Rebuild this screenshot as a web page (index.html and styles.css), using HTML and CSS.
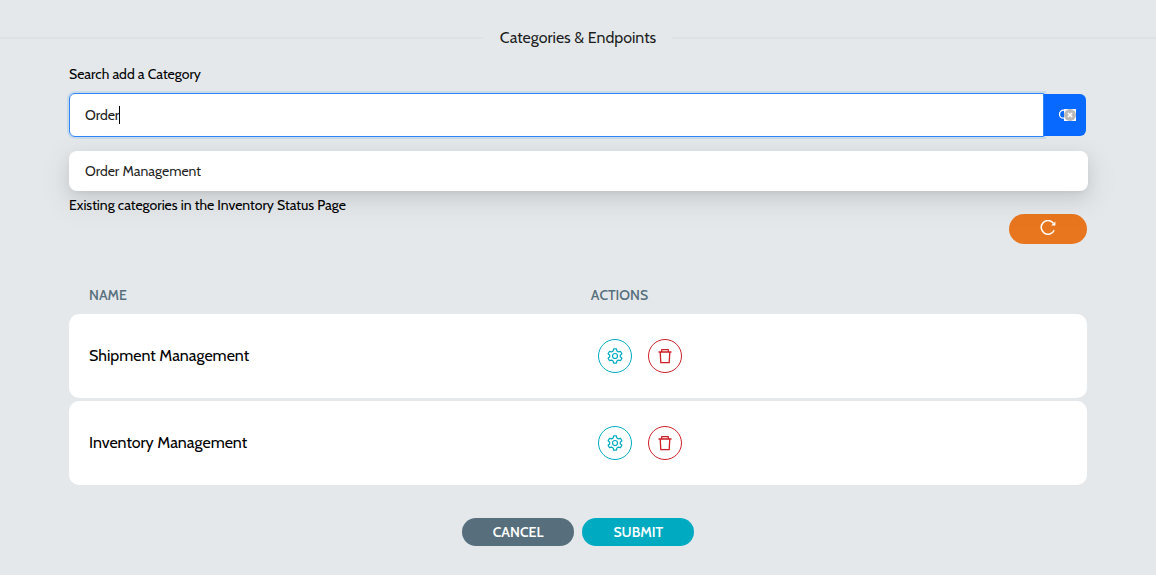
FILE: index.html
```
<!DOCTYPE html>
<html lang="en">
<head>
    <meta charset="UTF-8">
    <meta name="viewport" content="width=device-width, initial-scale=1.0">
    <title>Categories &amp; Endpoints</title>
    <link rel="stylesheet" href="styles.css">
</head>
<body>
    <h1 class="divider">Categories &amp; Endpoints</h1>

    <main class="container">
        <form class="search">
            <label class="label" for="category">Search add a Category</label>
            <div class="search-bar">
                <div class="search-field">
                    <input type="text" id="category" class="search-input" value="Order" autocomplete="off">
                    <span class="caret"></span>
                </div>
                <button type="submit" class="search-btn" aria-label="Search">
                    <svg width="20" height="16" viewBox="0 0 20 16">
                        <path d="M8 3.2H6.5a4 4 0 0 0 0 8H8" fill="none" stroke="#fff" stroke-width="1.3"/>
                        <rect x="7" y="2" width="12" height="12" fill="#fff"/>
                        <circle cx="13" cy="8" r="6" fill="#b9b9b9"/>
                        <path d="M11 6l4 4M15 6l-4 4" stroke="#fff" stroke-width="1.5"/>
                    </svg>
                </button>
            </div>
            <ul class="suggestions">
                <li class="suggestion">Order Management</li>
            </ul>
        </form>

        <p class="label existing">Existing categories in the Inventory Status Page</p>
        <div class="toolbar">
            <button type="button" class="refresh-btn" aria-label="Refresh">
                <svg width="16" height="16" viewBox="0 0 16 16" fill="none" stroke="#fff" stroke-width="1.5">
                    <path d="M14.2 10.2A6.8 6.8 0 1 1 13.4 3.2"/>
                    <path d="M15.4 1.4v4.2h-4.2z" fill="#fff" stroke="none"/>
                </svg>
            </button>
        </div>

        <table class="categories">
            <thead>
                <tr>
                    <th class="col-name">Name</th>
                    <th>Actions</th>
                </tr>
            </thead>
            <tbody>
                <tr>
                    <td>Shipment Management</td>
                    <td>
                        <div class="actions">
                            <button type="button" class="icon-btn settings" aria-label="Settings">
                                <svg width="16" height="16" viewBox="0 0 16 16"><use href="#gear"/></svg>
                            </button>
                            <button type="button" class="icon-btn delete" aria-label="Delete">
                                <svg width="16" height="16" viewBox="0 0 16 16"><use href="#trash"/></svg>
                            </button>
                        </div>
                    </td>
                </tr>
                <tr>
                    <td>Inventory Management</td>
                    <td>
                        <div class="actions">
                            <button type="button" class="icon-btn settings" aria-label="Settings">
                                <svg width="16" height="16" viewBox="0 0 16 16"><use href="#gear"/></svg>
                            </button>
                            <button type="button" class="icon-btn delete" aria-label="Delete">
                                <svg width="16" height="16" viewBox="0 0 16 16"><use href="#trash"/></svg>
                            </button>
                        </div>
                    </td>
                </tr>
            </tbody>
        </table>

        <div class="footer">
            <button type="button" class="btn btn-cancel">CANCEL</button>
            <button type="button" class="btn btn-submit">SUBMIT</button>
        </div>
    </main>

    <!-- Shared icons -->
    <svg class="sprite" width="0" height="0">
        <symbol id="gear" viewBox="0 0 16 16">
            <g fill="none" stroke="currentColor" stroke-width="1.2" stroke-linejoin="round">
                <path d="M6.6 .9h2.8l.5 2.1 1.5.9 2.1-.6 1.4 2.4-1.6 1.5v1.6l1.6 1.5-1.4 2.4-2.1-.6-1.5.9-.5 2.1H6.6L6.1 13l-1.5-.9-2.1.6-1.4-2.4 1.6-1.5V7.2L1.1 5.7l1.4-2.4 2.1.6L6.1 3z"/>
                <circle cx="8" cy="8" r="2.5"/>
            </g>
        </symbol>
        <symbol id="trash" viewBox="0 0 16 16">
            <g fill="none" stroke="currentColor" stroke-width="1.3" stroke-linejoin="round">
                <path d="M1.5 4h13M4.7 4V1.6h6.6V4M3.2 4l.6 10.6h8.4L12.8 4"/>
            </g>
        </symbol>
    </svg>
</body>
</html>
```

FILE: styles.css
```
* {
    box-sizing: border-box;
}
body {
    margin: 0;
    font-family: Cabin, Lato, sans-serif;
    font-size: 14px;
    line-height: 20px;
    color: #000;
    background-color: #e4e8eb;
}
button {
    font-family: inherit;
    border: none;
    padding: 0;
    cursor: pointer;
}
svg {
    display: block;
}
.divider {
    display: flex;
    align-items: center;
    gap: 16px;
    margin: 0;
    padding-top: 26px;
    font-size: 16px;
    line-height: 24px;
    font-weight: 400;
    color: rgba(0, 0, 0, 0.88);
}
.divider::before,
.divider::after {
    content: "";
    flex: 1;
    height: 2px;
    background-color: #e0e1e3;
}
.container {
    padding: 14px 69px 28px;
}
.label {
    display: block;
    margin: 0;
    font-weight: 400;
}
/* Search */
.search {
    position: relative;
}
.search-bar {
    display: flex;
    align-items: center;
    margin-top: 9px;
    padding-right: 1px;
}
.search-field {
    position: relative;
    flex: 1;
}
.search-input {
    display: block;
    width: 100%;
    height: 44px;
    padding: 0 15px;
    font-family: inherit;
    font-size: 14px;
    color: #222;
    background-color: #fff;
    border: 1px solid #2f86f6;
    border-radius: 6px 0 0 6px;
    outline: none;
    box-shadow: 0 0 0 2px rgba(5, 125, 255, 0.12);
}
.caret {
    position: absolute;
    top: 13px;
    left: 50px;
    width: 1px;
    height: 18px;
    background-color: #000;
}
.search-btn {
    position: relative;
    display: flex;
    align-items: center;
    justify-content: center;
    width: 42px;
    height: 42px;
    padding-left: 4px;
    background-color: #0769ff;
    border-radius: 0 6px 6px 0;
}
.suggestions {
    position: absolute;
    top: 87px;
    left: 0;
    right: -1px;
    margin: 0;
    padding: 4px;
    list-style: none;
    background-color: #fff;
    border-radius: 8px;
    box-shadow: 0 6px 16px rgba(0, 0, 0, 0.08), 0 3px 6px -4px rgba(0, 0, 0, 0.12), 0 9px 28px 8px rgba(0, 0, 0, 0.05);
}
.suggestion {
    padding: 6px 12px;
    color: rgba(0, 0, 0, 0.88);
}
.existing {
    margin-top: 58px;
}
.toolbar {
    display: flex;
    justify-content: flex-end;
}
.refresh-btn {
    display: flex;
    align-items: center;
    justify-content: center;
    width: 78px;
    height: 30px;
    margin-top: -1px;
    padding-bottom: 2px;
    background-color: #e8761e;
    border-radius: 15px;
}
/* Table */
.categories {
    width: 100%;
    margin-top: 28px;
    border-collapse: separate;
    border-spacing: 0 3px;
    table-layout: fixed;
}
.categories th {
    height: 36px;
    padding: 4px 20px 0;
    text-align: left;
    text-transform: uppercase;
    font-weight: 500;
    color: #566f7c;
}
.categories .col-name {
    width: 49.3%;
}
.categories td {
    height: 84px;
    padding: 0 20px;
    font-size: 16px;
    font-weight: 400;
    background-color: #fff;
}
.categories td:first-child {
    border-radius: 10px 0 0 10px;
}
.categories td:last-child {
    border-radius: 0 10px 10px 0;
}
.actions {
    display: flex;
    gap: 16px;
    padding-left: 7px;
}
.icon-btn {
    display: flex;
    align-items: center;
    justify-content: center;
    width: 34px;
    height: 34px;
    background-color: #fff;
    border: 1px solid currentColor;
    border-radius: 50%;
}
.settings {
    color: #00abc2;
}
.delete {
    color: #cd2027;
}
/* Footer buttons */
.footer {
    display: flex;
    justify-content: center;
    gap: 8px;
    margin-top: 30px;
}
.btn {
    height: 28px;
    padding: 0 31px;
    font-size: 14px;
    font-weight: 600;
    color: #fff;
    border-radius: 14px;
}
.btn-cancel {
    background-color: #576f7d;
}
.btn-submit {
    background-color: #00abc2;
}
.sprite {
    position: absolute;
}
```
